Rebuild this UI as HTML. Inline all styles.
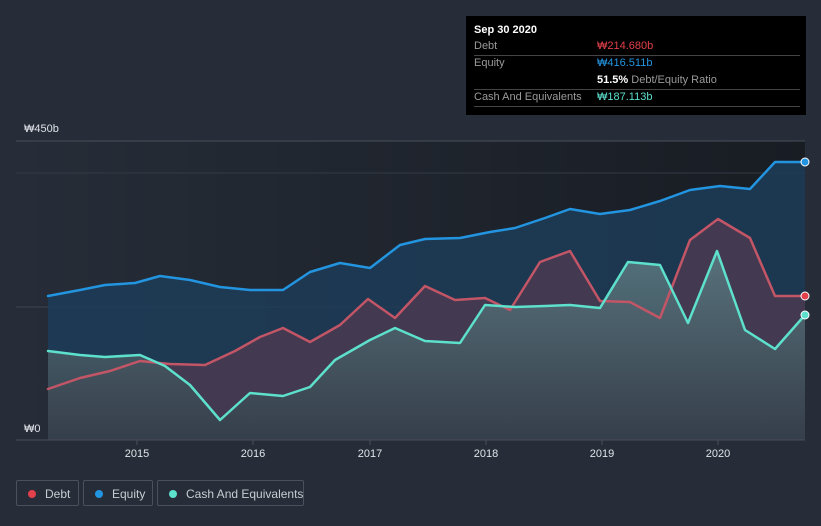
<!DOCTYPE html>
<html><head><meta charset="utf-8"><style>
html,body{margin:0;width:821px;height:526px;overflow:hidden}
body{background:#262d38;font-family:"Liberation Sans",sans-serif;position:relative}
.tip{position:absolute;left:466px;top:16px;width:340px;height:99px;background:#000;color:#fff;font-size:11px}
.tip .r{position:absolute;left:8px;width:326px;border-bottom:1px solid #444;height:17px;line-height:17px;white-space:nowrap}
.lbl{color:#9a9a9a}
.v{position:absolute;left:123px}
.leg{position:absolute;top:480px;height:26px;border:1px solid #4a515c;border-radius:2px;color:#c8ccd2;font-size:12px;line-height:26px;box-sizing:border-box;white-space:nowrap}
.leg i{position:absolute;left:11px;top:9px;width:8px;height:8px;border-radius:50%}
.leg span{position:absolute;left:28px}
</style></head><body>
<svg width="821" height="526" style="position:absolute;left:0;top:0">
<defs>
<linearGradient id="bg" x1="0" x2="1" y1="0" y2="0"><stop offset="0" stop-color="#262d38"/><stop offset="1" stop-color="#181c23"/></linearGradient>
<linearGradient id="cf" x1="0" x2="0" y1="0" y2="1"><stop offset="0" stop-color="#5a7880"/><stop offset="1" stop-color="#343f4a"/></linearGradient>
</defs>
<rect x="16" y="141" width="789" height="299" fill="url(#bg)"/>
<line x1="16" y1="141" x2="805" y2="141" stroke="#4a505a"/>
<line x1="16" y1="173" x2="805" y2="173" stroke="#333a45"/>
<line x1="16" y1="307" x2="805" y2="307" stroke="#3d4550"/>
<path d="M48,296 L80,290 L105,285 L135,283 L160,276 L190,280 L220,287 L250,290 L283,290 L310,272 L340,263 L370,268 L400,245 L425,239 L460,238 L490,232 L515,228 L545,218 L570,209 L600,214 L630,210 L660,201 L690,190 L720,186 L750,189 L775,162 L805,162 L805,440 L48,440Z" fill="#1d3c58" opacity="0.85"/>
<path d="M48,389 L80,378 L110,371 L140,361 L170,364 L205,365 L235,351 L260,337 L283,328 L310,342 L340,325 L368,299 L395,318 L425,286 L455,300 L485,298 L510,310 L540,262 L570,251 L600,301 L630,302 L660,318 L690,240 L718,219 L750,238 L775,296 L805,296 L805,440 L48,440Z" fill="#4a3a50" opacity="0.85"/>
<path d="M48,351 L80,355 L105,357 L140,355 L165,366 L190,385 L220,420 L250,393 L283,396 L310,387 L335,360 L370,340 L395,328 L425,341 L460,343 L485,305 L515,307 L545,306 L570,305 L600,308 L628,262 L660,265 L688,323 L717,251 L745,330 L775,349 L805,315 L805,440 L48,440Z" fill="url(#cf)" opacity="0.9"/>
<g fill="none" stroke-width="2.5" stroke-linejoin="round" stroke-linecap="round">
<path d="M48,296 L80,290 L105,285 L135,283 L160,276 L190,280 L220,287 L250,290 L283,290 L310,272 L340,263 L370,268 L400,245 L425,239 L460,238 L490,232 L515,228 L545,218 L570,209 L600,214 L630,210 L660,201 L690,190 L720,186 L750,189 L775,162 L805,162" stroke="#2394df"/>
<path d="M48,389 L80,378 L110,371 L140,361 L170,364 L205,365 L235,351 L260,337 L283,328 L310,342 L340,325 L368,299 L395,318 L425,286 L455,300 L485,298 L510,310 L540,262 L570,251 L600,301 L630,302 L660,318 L690,240 L718,219 L750,238 L775,296 L805,296" stroke="#c25566"/>
<path d="M48,351 L80,355 L105,357 L140,355 L165,366 L190,385 L220,420 L250,393 L283,396 L310,387 L335,360 L370,340 L395,328 L425,341 L460,343 L485,305 L515,307 L545,306 L570,305 L600,308 L628,262 L660,265 L688,323 L717,251 L745,330 L775,349 L805,315" stroke="#5de0cc"/>
</g>
<circle cx="805" cy="162" r="4" fill="#2394df" stroke="#fff"/>
<circle cx="805" cy="296" r="4" fill="#e2404a" stroke="#fff"/>
<circle cx="805" cy="315" r="4" fill="#5de0cc" stroke="#fff"/>
<line x1="16" y1="440" x2="805" y2="440" stroke="#4a505a"/>
<g stroke="#4a505a"><line x1="137" y1="440" x2="137" y2="445"/><line x1="253" y1="440" x2="253" y2="445"/><line x1="370" y1="440" x2="370" y2="445"/><line x1="486" y1="440" x2="486" y2="445"/><line x1="602" y1="440" x2="602" y2="445"/><line x1="718" y1="440" x2="718" y2="445"/></g>
<g fill="#e0e3e8" font-size="11" font-family="Liberation Sans,sans-serif" text-anchor="middle">
<text x="137" y="457">2015</text><text x="253" y="457">2016</text><text x="370" y="457">2017</text><text x="486" y="457">2018</text><text x="602" y="457">2019</text><text x="718" y="457">2020</text>
</g>
<text x="24" y="132" fill="#e0e3e8" font-size="11">₩450b</text>
<text x="24" y="432" fill="#e0e3e8" font-size="11">₩0</text>
</svg>
<div class="tip">
<div style="position:absolute;left:8px;top:8px;font-weight:bold">Sep 30 2020</div>
<div class="r" style="top:22px"><span class="lbl">Debt</span><span class="v" style="color:#e2404a">₩214.680b</span></div>
<div class="r" style="top:39px;border:none"><span class="lbl">Equity</span><span class="v" style="color:#2394df">₩416.511b</span></div>
<div class="r" style="top:56px"><span class="v"><b>51.5%</b> <span class="lbl">Debt/Equity Ratio</span></span></div>
<div class="r" style="top:73px"><span class="lbl">Cash And Equivalents</span><span class="v" style="color:#5de0cc">₩187.113b</span></div>
</div>
<div class="leg" style="left:16px;width:63px"><i style="background:#e2404a"></i><span>Debt</span></div>
<div class="leg" style="left:83px;width:70px"><i style="background:#2394df"></i><span>Equity</span></div>
<div class="leg" style="left:157px;width:147px"><i style="background:#5de0cc"></i><span>Cash And Equivalents</span></div>
</body></html>
